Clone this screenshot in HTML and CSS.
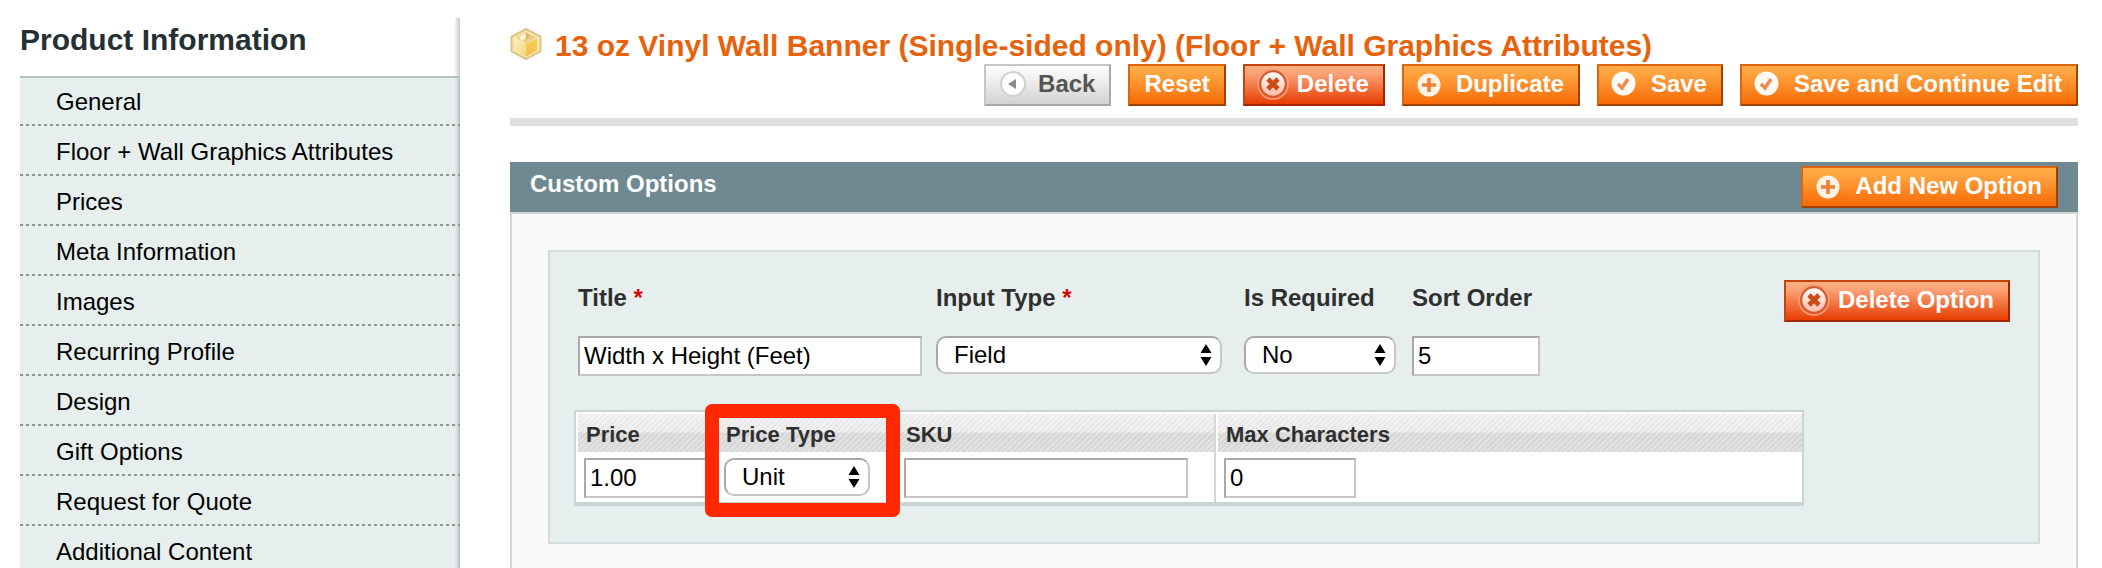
FILE: index.html
```html
<!DOCTYPE html>
<html lang="en">
<head>
<meta charset="utf-8">
<title>Product Information</title>
<link rel="stylesheet" href="styles.css">
</head>
<body>
<svg class="defs" aria-hidden="true">
  <defs>
    <linearGradient id="box-left" x1="0" y1="0" x2="1" y2="1"><stop offset="0" stop-color="#fbeec2"/><stop offset="1" stop-color="#f5d779"/></linearGradient>
    <linearGradient id="box-right" x1="0" y1="0" x2="0" y2="1"><stop offset="0" stop-color="#f7d25c"/><stop offset="1" stop-color="#efbf45"/></linearGradient>
    <linearGradient id="pink" x1="0" y1="0" x2="0" y2="1"><stop offset="0" stop-color="#ffffff"/><stop offset="1" stop-color="#ffb9a4"/></linearGradient>
    <symbol id="icon-plus" viewBox="0 0 32 32"><circle cx="13" cy="17" r="11.5" fill="#fff3e4"/><path d="M13 10v14M6 17h14" stroke="#ee8038" stroke-width="3.6" fill="none"/></symbol>
    <symbol id="icon-check" viewBox="0 0 32 32"><circle cx="12.500" cy="15.500" r="12" fill="#fffaf4"/><path d="M7 16l4 4 6-9" stroke="#f08a4c" stroke-width="3.4" fill="none"/></symbol>
    <symbol id="icon-delete" viewBox="0 0 32 32"><circle cx="16" cy="16" r="15" fill="none" stroke="#f6a07c" stroke-width="1.500"/><circle cx="16" cy="16" r="12.800" fill="url(#pink)" stroke="#d65a30" stroke-width="2.200"/><path d="M11 11l10 10M21 11L11 21" stroke="#cc4a1a" stroke-width="4.600" fill="none"/></symbol>
    <symbol id="icon-back" viewBox="0 0 32 32"><circle cx="15" cy="16" r="12" fill="#fff" stroke="#cfcfcf" stroke-width="2"/><path d="M10 16l8-5v10z" fill="#8b8b8b"/></symbol>
    <symbol id="icon-arrows" viewBox="0 0 12 24"><path d="M6 1l5.500 9H.5zM6 23l5.500-9H.5z" fill="#000"/></symbol>
  </defs>
</svg>
<div class="page">
  <aside class="sidebar">
    <h2 class="sidebar-title">Product Information</h2>
    <nav>
      <ul class="tabs">
        <li><a href="#">General</a></li>
        <li><a href="#">Floor + Wall Graphics Attributes</a></li>
        <li><a href="#">Prices</a></li>
        <li><a href="#">Meta Information</a></li>
        <li><a href="#">Images</a></li>
        <li><a href="#">Recurring Profile</a></li>
        <li><a href="#">Design</a></li>
        <li><a href="#">Gift Options</a></li>
        <li><a href="#">Request for Quote</a></li>
        <li><a href="#">Additional Content</a></li>
      </ul>
    </nav>
  </aside>
  <main class="main">
    <header class="content-header">
      <h1 class="product-title">
        <svg class="box-icon" viewBox="0 0 32 32" aria-hidden="true">
          <path d="M16 1l14.500 7.500v15L16 31 1.500 23.500v-15z" fill="#f8e6b0" stroke="#dcc388" stroke-width="2"/>
          <path d="M16 4l10 5.500-10 5.500L6 9.500z" fill="#e9cd84"/>
          <path d="M5 10.500L16 15.500v13L5 22.500z" fill="url(#box-left)"/>
          <path d="M27 10.500L16 15.500v13l11-6z" fill="url(#box-right)"/>
          <path d="M9 9l6-4 1 5-4 3z" fill="#fdf3cf"/>
          <path d="M16 5l4 3-4 4z" fill="#dcb65e"/>
        </svg>
        <span>13 oz Vinyl Wall Banner (Single-sided only) (Floor + Wall Graphics Attributes)</span>
      </h1>
      <div class="actions">
        <button type="button" class="btn btn-back"><svg class="icon" aria-hidden="true"><use href="#icon-back"/></svg>Back</button>
        <button type="button" class="btn">Reset</button>
        <button type="button" class="btn btn-delete"><svg class="icon" aria-hidden="true"><use href="#icon-delete"/></svg>Delete</button>
        <button type="button" class="btn"><svg class="icon" aria-hidden="true"><use href="#icon-plus"/></svg>Duplicate</button>
        <button type="button" class="btn"><svg class="icon" aria-hidden="true"><use href="#icon-check"/></svg>Save</button>
        <button type="button" class="btn"><svg class="icon" aria-hidden="true"><use href="#icon-check"/></svg>Save and Continue Edit</button>
      </div>
    </header>
    <section class="panel">
      <div class="panel-head">
        <h2 class="panel-title">Custom Options</h2>
        <button type="button" class="btn"><svg class="icon" aria-hidden="true"><use href="#icon-plus"/></svg>Add New Option</button>
      </div>
      <div class="panel-body">
        <div class="option-box">
          <div class="option-top">
            <div class="fields">
              <div class="field">
                <label for="title">Title <span class="required">*</span></label>
                <input id="title" class="text w-title" type="text" value="Width x Height (Feet)">
              </div>
              <div class="field">
                <label for="input-type">Input Type <span class="required">*</span></label>
                <span class="select-wrap w-type"><select id="input-type"><option>Field</option></select><svg class="arrows" aria-hidden="true"><use href="#icon-arrows"/></svg></span>
              </div>
              <div class="field">
                <label for="is-required">Is Required</label>
                <span class="select-wrap w-required"><select id="is-required"><option>No</option></select><svg class="arrows" aria-hidden="true"><use href="#icon-arrows"/></svg></span>
              </div>
              <div class="field">
                <label for="sort-order">Sort Order</label>
                <input id="sort-order" class="text w-sort" type="text" value="5">
              </div>
            </div>
            <button type="button" class="btn btn-delete"><svg class="icon" aria-hidden="true"><use href="#icon-delete"/></svg>Delete Option</button>
          </div>
          <div class="grid-box">
            <table class="price-table">
              <colgroup><col class="col-price"><col class="col-type"><col class="col-sku"><col></colgroup>
              <thead>
                <tr>
                  <th scope="col" id="h-price">Price</th>
                  <th scope="col" id="h-type">Price Type</th>
                  <th scope="col" id="h-sku" class="divider">SKU</th>
                  <th scope="col" id="h-max" class="last">Max Characters</th>
                </tr>
              </thead>
              <tbody>
                <tr>
                  <td><input class="text w-price" type="text" value="1.00" aria-labelledby="h-price"></td>
                  <td class="highlighted">
                    <span class="select-wrap w-unit"><select aria-labelledby="h-type"><option>Unit</option></select><svg class="arrows" aria-hidden="true"><use href="#icon-arrows"/></svg></span>
                    <span class="highlight"></span>
                  </td>
                  <td class="divider"><input class="text w-sku" type="text" value="" aria-labelledby="h-sku"></td>
                  <td class="last"><input class="text w-max" type="text" value="0" aria-labelledby="h-max"></td>
                </tr>
              </tbody>
            </table>
          </div>
        </div>
      </div>
    </section>
  </main>
</div>
</body>
</html>
```

FILE: styles.css
```css
* { box-sizing: border-box; }

body {
  margin: 0;
  background: #fff;
  color: #000;
  font: 24px/30px "Liberation Sans", Arial, sans-serif;
  overflow: hidden;
}

h1, h2, ul { margin: 0; padding: 0; }

.defs { position: absolute; width: 0; height: 0; }

.page {
  display: flex;
  gap: 50px;
  min-height: 100vh;
  padding: 18px 24px 0 20px;
}

/* Sidebar */
.sidebar {
  flex: 0 0 440px;
  background: linear-gradient(to left, #c9c9c9, #ececec 4px, #fff 6px);
}

.sidebar-title {
  height: 58px;
  padding-top: 4px;
  font-size: 30px;
  line-height: 36px;
  color: #253034;
}

.tabs {
  list-style: none;
  border-top: 2px solid #b8c1c0;
  background: linear-gradient(to left, #a9bbbd, #d5e0e0 3px, #e6efed 6px);
}

.tabs li {
  height: 50px;
  background: repeating-linear-gradient(to right, #8d9594 0 3px, transparent 3px 6px) left bottom / 100% 2px no-repeat;
}

.tabs li:first-child { height: 48px; }
.tabs li:first-child a { padding-top: 9px; }

.tabs a {
  display: block;
  padding: 11px 36px 0;
  color: #000;
  text-decoration: none;
}

/* Content header */
.main { flex: 1; min-width: 0; display: flex; flex-direction: column; }

.content-header {
  padding: 10px 0 12px;
  border-bottom: 8px solid #dfdfdf;
}

.product-title {
  display: flex;
  gap: 13px;
  height: 36px;
  font-size: 30px;
  line-height: 36px;
  color: #e8620c;
  white-space: nowrap;
}

.box-icon { width: 32px; height: 32px; flex: none; }

.actions { display: flex; justify-content: flex-end; gap: 17px; }

.btn {
  display: inline-flex;
  align-items: center;
  flex: none;
  gap: 8px;
  height: 42px;
  padding: 0 14px 2px;
  border: 2px solid;
  border-color: #dd650f #a04300 #a04300 #dd650f;
  background: linear-gradient(#ffac47, #ffa440 20%, #f66a05);
  color: #fff;
  font: bold 24px/30px "Liberation Sans", Arial, sans-serif;
  white-space: nowrap;
}

.btn:has(.icon) { padding-left: 12px; }

.btn-back {
  border-color: #c6c6c6 #a9a9a9 #a9a9a9 #c6c6c6;
  background: linear-gradient(#fff, #d2d2d2);
  color: #555;
}

.btn-delete {
  border-color: #c5440f #a52503 #a52503 #c5440f;
  background: linear-gradient(#ffae84, #fba277 20%, #e83d00);
}

.icon { width: 32px; height: 32px; flex: none; }

/* Panel */
.panel { flex: 1; display: flex; flex-direction: column; margin-top: 36px; }

.panel-head {
  display: flex;
  justify-content: space-between;
  align-items: center;
  height: 50px;
  padding: 0 20px;
  background: #6f8992;
}

.panel-title {
  padding-bottom: 7px;
  font-size: 24px;
  line-height: 30px;
  color: #fff;
}

.panel-body {
  flex: 1;
  padding: 36px;
  border: 2px solid #d5d7d7;
  border-bottom: 0;
  background: #fafafa;
}

.option-box {
  padding: 28px 28px 36px 24px;
  border: 2px solid #d1dddd;
  background: #e6efed;
}

.option-top {
  display: flex;
  justify-content: space-between;
  align-items: flex-start;
  margin-bottom: 34px;
}

.fields {
  display: grid;
  grid-template-columns: 358px 308px 168px 128px;
  padding: 3px 0 0 4px;
}

.field { display: flex; flex-direction: column; }

.field label {
  margin-bottom: 23px;
  font-weight: bold;
  color: #2f2f2f;
  white-space: nowrap;
}

.required { color: #d40707; }

.text {
  display: block;
  height: 40px;
  padding: 0 4px;
  border: 2px solid;
  border-color: #a9a9a9 #c6c6c6 #c6c6c6 #a9a9a9;
  border-radius: 0;
  background: #fff;
  color: #000;
  font: 24px "Liberation Sans", Arial, sans-serif;
}

.select-wrap { position: relative; display: block; }

.select-wrap select {
  appearance: none;
  display: block;
  width: 100%;
  height: 38px;
  padding: 0 32px 2px 16px;
  border: 2px solid;
  border-color: #a9a9a9 #c6c6c6 #c6c6c6 #a9a9a9;
  border-radius: 10px;
  background: #fff;
  color: #000;
  font: 24px "Liberation Sans", Arial, sans-serif;
}

.arrows {
  position: absolute;
  top: 7px;
  right: 10px;
  width: 12px;
  height: 24px;
  pointer-events: none;
}

.w-title { width: 344px; }
.w-type { width: 286px; }
.w-required { width: 152px; }
.w-sort { width: 128px; }
.w-price { width: 128px; }
.w-unit { width: 146px; }
.w-sku { width: 284px; }
.w-max { width: 132px; }

/* Price grid */
.grid-box {
  max-width: 1230px;
  padding: 2px 0 0 2px;
  border: 2px solid #cbd4d4;
  border-bottom-width: 4px;
  background: #fff;
}

.price-table { width: 100%; table-layout: fixed; border-collapse: separate; border-spacing: 0; }

.col-price { width: 140px; }
.col-type { width: 180px; }
.col-sku { width: 318px; }

.price-table thead {
  background:
    repeating-linear-gradient(135deg, rgba(255, 255, 255, 0.2) 0 2px, rgba(0, 0, 0, 0.02) 2px 4px),
    linear-gradient(#f1f1f1, #ebebeb 18px, #d9d9d9 19px, #dcdcdc);
}

.price-table th {
  height: 38px;
  padding: 4px 8px 0;
  font-size: 22px;
  line-height: 30px;
  text-align: left;
  color: #2f2f2f;
}

.price-table td { height: 50px; padding: 6px 6px 4px; vertical-align: top; }

.price-table .divider { border-right: 2px solid #d3d7d7; }
.price-table .last { border-left: 2px solid #fff; }

.highlighted { position: relative; }

/* Callout frame drawn over the Price Type column */
.highlight {
  position: absolute;
  inset: -48px -2px -15px -13px;
  border: 14px solid #ff2800;
  border-radius: 7px;
  pointer-events: none;
}
```
